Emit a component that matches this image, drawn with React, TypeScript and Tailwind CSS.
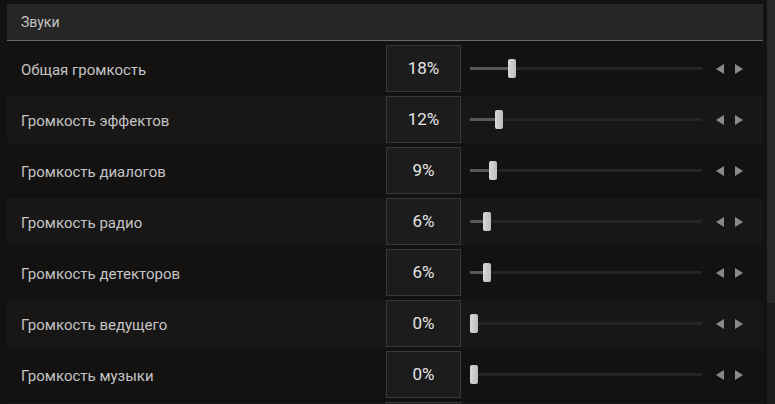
import React from 'react';

const settings = [
  { label: 'Общая громкость', value: 18 },
  { label: 'Громкость эффектов', value: 12 },
  { label: 'Громкость диалогов', value: 9 },
  { label: 'Громкость радио', value: 6 },
  { label: 'Громкость детекторов', value: 6 },
  { label: 'Громкость ведущего', value: 0 },
  { label: 'Громкость музыки', value: 0 },
];

function Slider({ value }: { value: number }) {
  const offset = Math.round(value * 2.1);
  return (
    <div className="relative ml-[9px] h-[20px] w-[232px]">
      <div className="absolute left-0 top-[8px] h-[3px] w-full bg-[#262524]" />
      <div
        className="absolute left-0 top-[8px] h-[3px] bg-[#595858]"
        style={{ width: offset + 4 }}
      />
      <div
        className="absolute top-0 h-[19px] w-[8px] rounded-[2px] bg-gradient-to-r from-[#d8d8d8] to-[#bdbdbd]"
        style={{ left: offset }}
      />
    </div>
  );
}

function Arrows() {
  return (
    <div className="ml-[14px] flex items-center gap-[11px]">
      <svg width="8" height="10" viewBox="0 0 8 10">
        <polygon points="8,0 8,10 0,5" fill="#8a8a8a" />
      </svg>
      <svg width="8" height="10" viewBox="0 0 8 10">
        <polygon points="0,0 0,10 8,5" fill="#8a8a8a" />
      </svg>
    </div>
  );
}

export default function App() {
  return (
    <div
      className="flex h-[404px] w-[775px] overflow-hidden bg-[#131211]"
      style={{ fontFamily: 'Roboto, "Noto Sans", sans-serif' }}
    >
      <div className="flex w-[763px] shrink-0 flex-col pl-[7px] pt-[4px]">
        <div className="flex h-[37px] shrink-0 items-center border-b border-[#6b6b6b] bg-[#262626] pl-[14px] pt-[1px] text-[14px] text-[#c4c4c4]">
          Звуки
        </div>
        <div className="mt-[4px] flex shrink-0 flex-col gap-[4px]">
          {settings.map((s, i) => (
            <div
              key={s.label}
              className={`flex h-[47px] shrink-0 items-center ${i % 2 === 1 ? 'bg-[#181716]' : 'bg-[#131211]'}`}
            >
              <div className="w-[379px] pl-[14px] pt-[3px] text-[15px] text-[#c4c4c4]">{s.label}</div>
              <div className="flex h-[47px] w-[75px] items-center justify-center border border-[#383838] bg-[#1c1c1c] pt-[1px] text-[17px] text-[#e4e4e4]">
                {s.value}%
              </div>
              <Slider value={s.value} />
              <Arrows />
            </div>
          ))}
          <div className="flex h-[47px] shrink-0 bg-[#181716] pl-[379px]">
            <div className="h-[47px] w-[75px] border border-[#383838] bg-[#1c1c1c]" />
          </div>
        </div>
      </div>
      <div className="ml-[4px] flex w-[8px] flex-col">
        <div className="h-[303px] bg-[#2b2927]" />
        <div className="flex-1 bg-[#1d1b1a]" />
      </div>
    </div>
  );
}
